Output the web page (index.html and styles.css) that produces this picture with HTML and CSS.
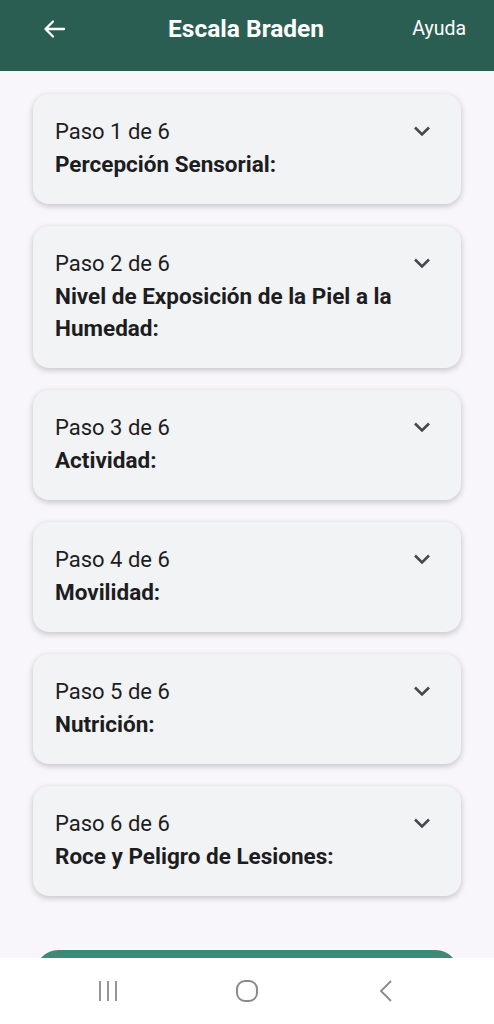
FILE: index.html
```html
<!DOCTYPE html>
<html lang="es">
<head>
    <meta charset="UTF-8">
    <meta name="viewport" content="width=device-width, initial-scale=1.0">
    <title>Escala Braden</title>
    <link rel="stylesheet" href="styles.css">
</head>
<body>
    <header class="barra">
        <span class="atras">
            <svg width="26" height="24" viewBox="0 0 26 24"><path d="M22 12H4M11 4.5L3.5 12l7.5 7.5" fill="none" stroke="#fff" stroke-width="2.3" stroke-linecap="round" stroke-linejoin="round"/></svg>
        </span>
        <h1 class="titulo">Escala Braden</h1>
        <span class="ayuda">Ayuda</span>
    </header>

    <main class="contenido">
        <div class="paso">
            <div class="paso_texto">
                <span class="paso_num">Paso 1 de 6</span>
                <span class="paso_nombre">Percepción Sensorial:</span>
            </div>
            <svg class="flecha" width="18" height="12" viewBox="0 0 18 12"><path d="M2 2.5l7 7 7-7" fill="none" stroke="#46484c" stroke-width="2.6"/></svg>
        </div>
        <div class="paso">
            <div class="paso_texto">
                <span class="paso_num">Paso 2 de 6</span>
                <span class="paso_nombre">Nivel de Exposición de la Piel a la Humedad:</span>
            </div>
            <svg class="flecha" width="18" height="12" viewBox="0 0 18 12"><path d="M2 2.5l7 7 7-7" fill="none" stroke="#46484c" stroke-width="2.6"/></svg>
        </div>
        <div class="paso">
            <div class="paso_texto">
                <span class="paso_num">Paso 3 de 6</span>
                <span class="paso_nombre">Actividad:</span>
            </div>
            <svg class="flecha" width="18" height="12" viewBox="0 0 18 12"><path d="M2 2.5l7 7 7-7" fill="none" stroke="#46484c" stroke-width="2.6"/></svg>
        </div>
        <div class="paso">
            <div class="paso_texto">
                <span class="paso_num">Paso 4 de 6</span>
                <span class="paso_nombre">Movilidad:</span>
            </div>
            <svg class="flecha" width="18" height="12" viewBox="0 0 18 12"><path d="M2 2.5l7 7 7-7" fill="none" stroke="#46484c" stroke-width="2.6"/></svg>
        </div>
        <div class="paso">
            <div class="paso_texto">
                <span class="paso_num">Paso 5 de 6</span>
                <span class="paso_nombre">Nutrición:</span>
            </div>
            <svg class="flecha" width="18" height="12" viewBox="0 0 18 12"><path d="M2 2.5l7 7 7-7" fill="none" stroke="#46484c" stroke-width="2.6"/></svg>
        </div>
        <div class="paso">
            <div class="paso_texto">
                <span class="paso_num">Paso 6 de 6</span>
                <span class="paso_nombre">Roce y Peligro de Lesiones:</span>
            </div>
            <svg class="flecha" width="18" height="12" viewBox="0 0 18 12"><path d="M2 2.5l7 7 7-7" fill="none" stroke="#46484c" stroke-width="2.6"/></svg>
        </div>
        <div class="boton"></div>
    </main>

    <nav class="navegacion">
        <svg width="22" height="22" viewBox="0 0 22 22"><path d="M3 1v20M11 1v20M19 1v20" stroke="#8a8a8a" stroke-width="1.8"/></svg>
        <svg width="24" height="24" viewBox="0 0 24 24"><rect x="2" y="2" width="20" height="20" rx="8" fill="none" stroke="#8a8a8a" stroke-width="2"/></svg>
        <svg width="18" height="24" viewBox="0 0 18 24"><path d="M14 2L4 12l10 10" fill="none" stroke="#8a8a8a" stroke-width="1.8"/></svg>
    </nav>
</body>
</html>
```

FILE: styles.css
```css
*{
    box-sizing: border-box;
}
body{
    margin: 0;
    background-color: #f8f6fb;
    font-family: Roboto, "Noto Sans", sans-serif;
    height: 1024px;
    overflow: hidden;
    display: flex;
    flex-direction: column;
}
.barra{
    height: 71px;
    flex: none;
    background-color: #2b5e52;
    color: #fff;
    display: flex;
    align-items: center;
    padding: 0 28px 14px 42px;
}
.atras{
    width: 26px;
    height: 24px;
    display: block;
}
.titulo{
    flex: 1;
    margin: 0;
    text-align: center;
    font-size: 24.5px;
    font-weight: 700;
    padding-left: 12px;
}
.ayuda{
    font-size: 19.5px;
}
.contenido{
    flex: 1;
    display: flex;
    flex-direction: column;
    gap: 22px;
    padding: 23px 33px 0 33px;
    overflow: hidden;
}
.paso{
    flex: none;
    background-color: #f2f3f5;
    border-radius: 16px;
    box-shadow: 0 2px 6px rgba(0, 0, 0, 0.22);
    display: flex;
    align-items: flex-start;
    padding: 22px 30px 24px 22px;
    min-height: 110px;
}
.paso_texto{
    flex: 1;
    display: flex;
    flex-direction: column;
    color: #1d1d1f;
    line-height: 32px;
}
.paso_num{
    font-size: 22px;
}
.paso_nombre{
    font-size: 22.5px;
    font-weight: 700;
    padding-right: 20px;
}
.flecha{
    margin-top: 9px;
}
.boton{
    flex: none;
    height: 40px;
    margin: 32px 3px 0 3px;
    background-color: #3d8a78;
    border-radius: 22px 22px 0 0;
}
.navegacion{
    flex: none;
    height: 66px;
    background-color: #fff;
    display: grid;
    grid-template-columns: 139px 139px 139px;
    justify-content: center;
    justify-items: center;
    align-items: center;
}
```
